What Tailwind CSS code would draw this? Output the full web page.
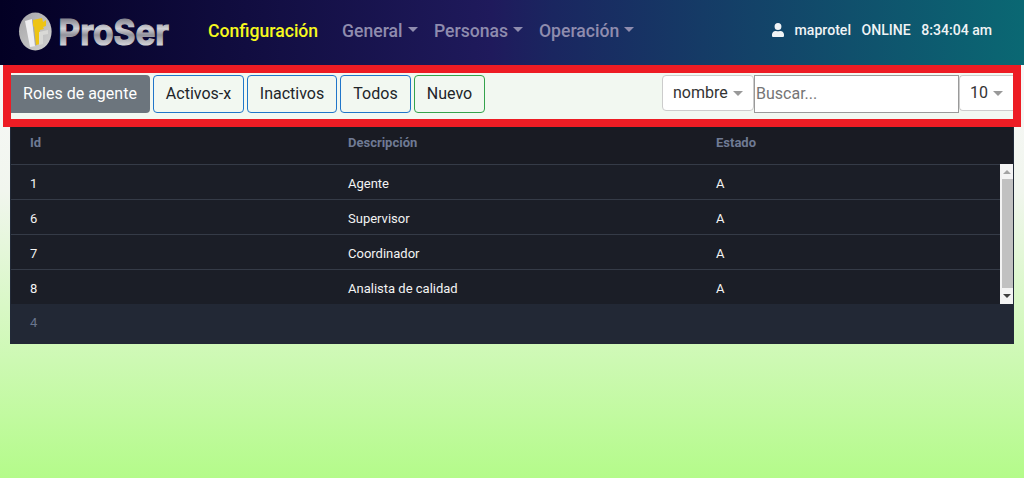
<!DOCTYPE html>
<html lang="es">
<head>
<meta charset="utf-8">
<title>ProSer</title>
<script src="https://cdn.jsdelivr.net/npm/@tailwindcss/browser@4"></script>
</head>
<body class="h-[478px] w-[1024px] overflow-hidden bg-[linear-gradient(180deg,#f7f7f7_15%,#f1f6ee_40%,#b4fb8a_100%)] font-['Roboto',sans-serif] text-[#212529]">
<header class="flex h-[65px] items-center bg-[linear-gradient(90deg,#030024_0%,#1f1a5c_48%,#1a2660_54%,#0a6873_100%)] pr-8 pb-1">
  <svg class="ml-[18px] h-[60px] w-[180px] shrink-0 overflow-visible" viewBox="0 -9 180 60">
    <defs>
      <linearGradient id="metal" gradientUnits="userSpaceOnUse" x1="0" y1="7" x2="0" y2="36"><stop offset="0" stop-color="#777783"/><stop offset=".4" stop-color="#d0d0d5"/><stop offset=".62" stop-color="#92929b"/><stop offset="1" stop-color="#d8d8dc"/></linearGradient>
      <linearGradient id="disc" x1="0" y1="0" x2="1" y2="1"><stop offset="0" stop-color="#a5a5a8"/><stop offset="1" stop-color="#d3d3d1"/></linearGradient>
    </defs>
    <ellipse cx="17.3" cy="21.5" rx="16.3" ry="19" fill="url(#disc)"/>
    <path d="M7 11l7-2 4 27-6 1z" fill="#efeff1"/>
    <path d="M14 9l3 2 2 24-2 1z" fill="#a6a6aa"/>
    <path d="M15 10l9-2 1 4 3-2v6l-3 1 1 2-4 1v14l-4 1-2-19-1 1z" fill="#edc413"/>
    <path d="M21 22l9-2v4l-5 1v9l-4 1z" fill="#d9d9d6"/>
    <text x="40.500" y="34.500" textLength="110.500" lengthAdjust="spacingAndGlyphs" font-family="Inter, sans-serif" font-size="36" font-weight="700" fill="url(#metal)" stroke="url(#metal)" stroke-width="1.2">ProSer</text>
  </svg>
  <nav class="ml-[10px] flex items-center pt-0.5 text-[17.6px] font-medium text-[#8f8cae]">
    <a class="w-[134px] text-[#f6f91e]">Configuración</a>
    <a class="flex w-[92px] items-center gap-[5px]">General<i class="mb-1 border-x-[5.5px] border-t-[5px] border-x-transparent border-t-current"></i></a>
    <a class="flex w-[105px] items-center gap-[5px]">Personas<i class="mb-1 border-x-[5.5px] border-t-[5px] border-x-transparent border-t-current"></i></a>
    <a class="flex items-center gap-[5px]">Operación<i class="mb-1 border-x-[5.5px] border-t-[5px] border-x-transparent border-t-current"></i></a>
  </nav>
  <div class="ml-auto flex items-center text-[14.08px] font-medium text-[#f0f3f5]">
    <svg class="mr-[10.5px] h-[14px] w-[12px]" viewBox="0 0 448 512" preserveAspectRatio="none" fill="currentColor"><path d="M224 256a128 128 0 1 0 0-256 128 128 0 0 0 0 256zm90 32h-17a174 174 0 0 1-146 0h-17C60 288 0 348 0 422v42c0 27 21 48 48 48h352c27 0 48-21 48-48v-42c0-74-60-134-134-134z"/></svg>
    <span class="mr-[10.5px]">maprotel</span><span class="mr-[10.5px]">ONLINE</span><span>8:34:04 am</span>
  </div>
</header>
<main>
  <section class="mx-[3px] flex h-[62px] items-start border-8 border-[#ed1c24] bg-[#f2f8f1] pt-0.5">
    <div class="flex h-[38px] gap-[3px] text-[16px]">
      <button class="w-[139px] rounded-r bg-[#6c757d] pr-px pb-px text-white">Roles de agente</button>
      <button class="w-[91px] rounded border border-[#2176c9] pb-px">Activos-x</button>
      <button class="w-[90px] rounded border border-[#2176c9] pb-px">Inactivos</button>
      <button class="w-[71px] rounded border border-[#2176c9] pb-px">Todos</button>
      <button class="w-[71px] rounded border border-[#35a34c] pb-px">Nuevo</button>
    </div>
    <div class="ml-auto flex items-start text-[16px] text-[#333]">
      <div class="flex h-9 w-[92px] items-center rounded border border-[#ccc] bg-white pb-px pl-[10px]">nombre<i class="mt-[2px] ml-[5px] border-x-[5px] border-t-[5px] border-x-transparent border-t-[#999]"></i></div>
      <input class="h-[38px] w-[205px] border border-[#9a9a9a] bg-white px-px pb-px placeholder:text-[#757575]" placeholder="Buscar...">
      <div class="flex h-9 w-[54px] items-center rounded-l border border-r-0 border-[#ccc] bg-white pb-px pl-[10px]">10<i class="mt-[2px] ml-[5px] border-x-[5px] border-t-[5px] border-x-transparent border-t-[#999]"></i></div>
    </div>
  </section>
  <section class="mx-[10px] h-[217px] border-x border-[#222a38] bg-[#1b1e27] text-[13px] text-[#f3f3f3]">
    <div class="flex h-[38px] items-center border-b border-[#353b47] bg-[#191b23] pb-[5px] pl-[19px] font-bold text-[#6f7a94]">
      <span class="w-[318px]">Id</span><span class="w-[368px]">Descripción</span><span>Estado</span>
    </div>
    <div class="-mt-px flex h-[140px]">
      <div class="flex-1 pt-px">
        <div class="flex h-[35px] items-center border-b border-[#353b47] pt-[3px] pl-[19px]"><span class="w-[318px]">1</span><span class="w-[368px]">Agente</span><span>A</span></div>
        <div class="flex h-[35px] items-center border-b border-[#353b47] pt-[3px] pl-[19px]"><span class="w-[318px]">6</span><span class="w-[368px]">Supervisor</span><span>A</span></div>
        <div class="flex h-[35px] items-center border-b border-[#353b47] pt-[3px] pl-[19px]"><span class="w-[318px]">7</span><span class="w-[368px]">Coordinador</span><span>A</span></div>
        <div class="flex h-[34px] items-center pt-[3px] pl-[19px]"><span class="w-[318px]">8</span><span class="w-[368px]">Analista de calidad</span><span>A</span></div>
      </div>
      <div class="flex w-[13px] flex-col items-center bg-[#f3f3f3]">
        <div class="flex h-[15px] items-center pl-px"><i class="mt-px border-x-4 border-b-4 border-x-transparent border-b-[#a3a3a3]"></i></div>
        <div class="ml-[2px] w-[11px] flex-1 bg-[#c1c1c1]"></div>
        <div class="flex h-4 items-center pl-px"><i class="border-x-4 border-t-4 border-x-transparent border-t-[#404040]"></i></div>
      </div>
    </div>
    <div class="flex h-10 bg-[#222835] pt-[9px] pl-[19px] text-[#6a758e]">4</div>
  </section>
</main>
</body>
</html>
